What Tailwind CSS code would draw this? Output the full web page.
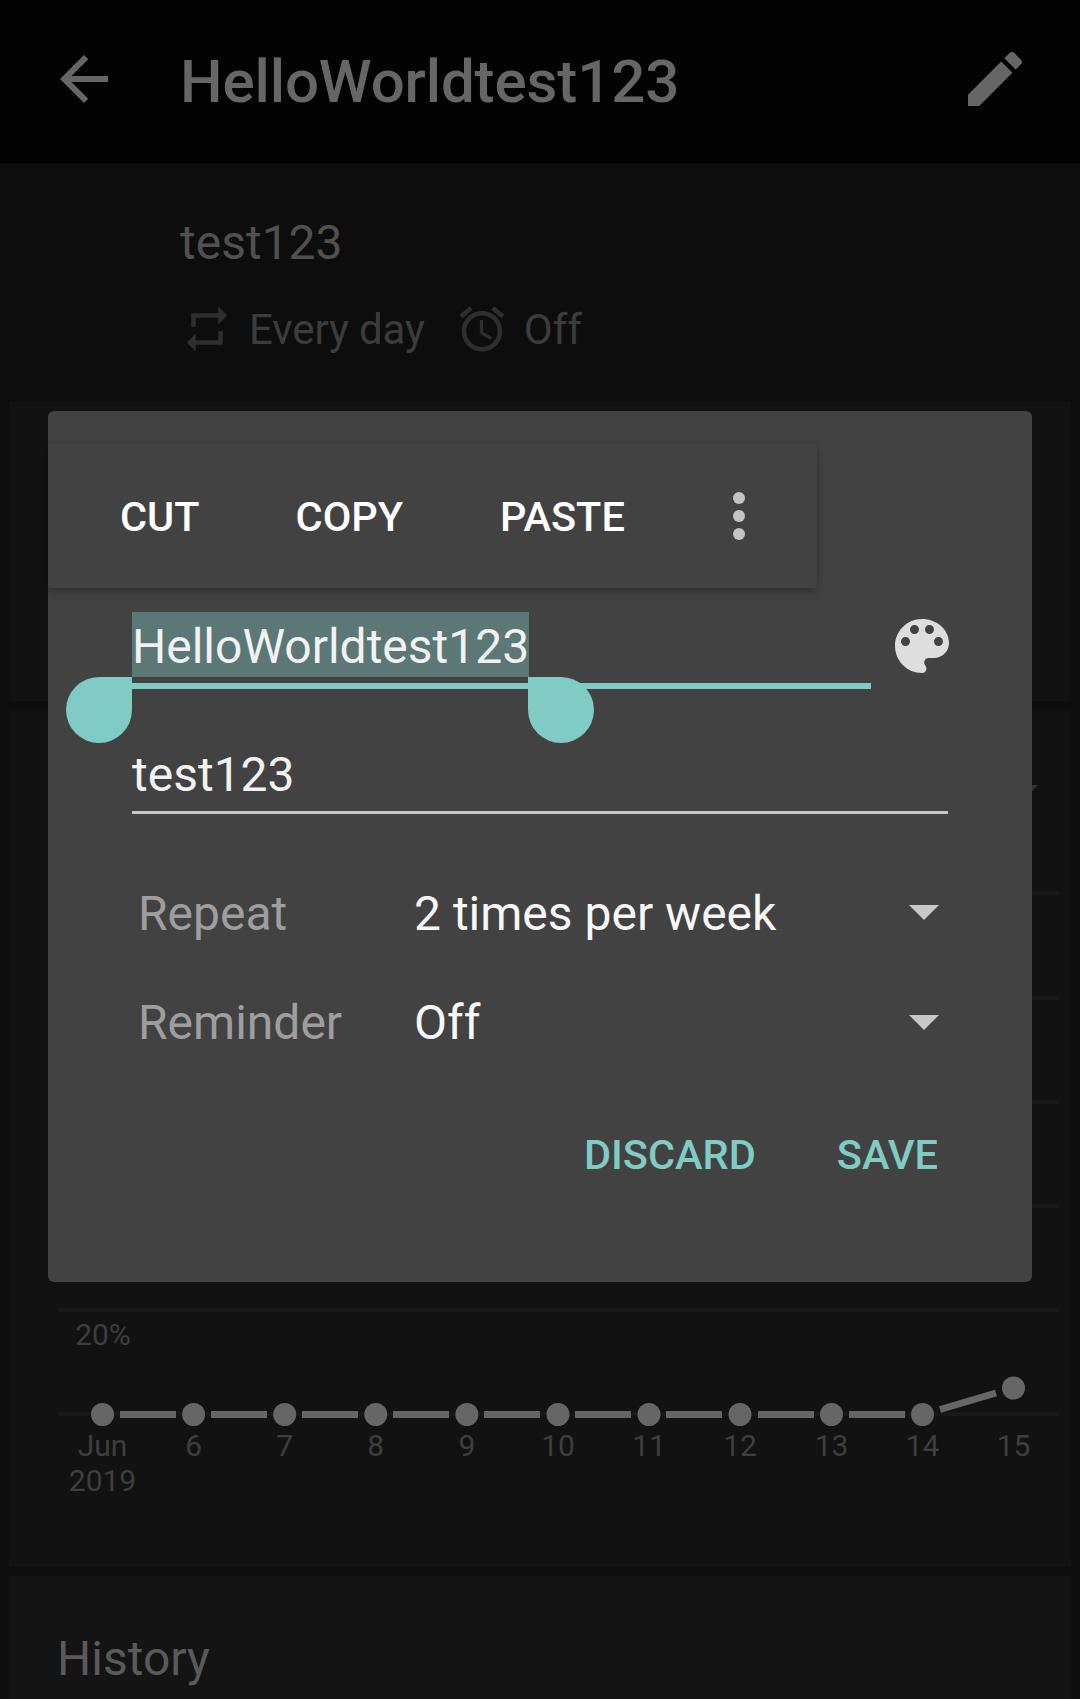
<!DOCTYPE html>
<html lang="en">
<head>
  <meta charset="UTF-8" />
  <meta name="viewport" content="width=device-width, initial-scale=1.0" />
  <title>HelloWorldtest123</title>
  <script src="https://cdn.jsdelivr.net/npm/@tailwindcss/browser@4"></script>
</head>
<body class="bg-[#0d0d0d] font-['Roboto',sans-serif]">
<div class="relative w-[1080px] h-[1699px] overflow-hidden">

  <!-- toolbar -->
  <div class="h-[163px] bg-[#030303] flex items-start">
    <svg class="ml-[48px] mt-[43px] w-[72px] h-[72px] shrink-0" viewBox="0 0 24 24" fill="#666666"><path d="M20 11H7.83l5.59-5.59L12 4l-8 8 8 8 1.41-1.41L7.83 13H20v-2z"/></svg>
    <div class="ml-[60px] mt-[47px] text-[60px] leading-[70px] tracking-[-0.1px] font-medium text-[#666666]">HelloWorldtest123</div>
    <svg class="ml-auto mr-[49px] mt-[43px] w-[72px] h-[72px] shrink-0" viewBox="0 0 24 24" fill="#666666"><path d="M3 17.25V21h3.75L17.81 9.94l-3.75-3.75L3 17.25zM20.71 7.04c.39-.39.39-1.02 0-1.41l-2.34-2.34c-.39-.39-1.02-.39-1.41 0l-1.83 1.83 3.75 3.75 1.83-1.83z"/></svg>
  </div>

  <!-- habit info -->
  <div class="h-[239px] pl-[180px] pt-[47px]">
    <div class="text-[48px] leading-[65px] text-[#505050]">test123</div>
    <div class="mt-[27px] flex items-center h-[54px] text-[42px] text-[#3c3c3c]">
      <svg class="w-[54px] h-[54px]" viewBox="0 0 24 24" fill="#2e2e2e"><path d="M7 7h10v3l4-4-4-4v3H5v6h2V7zm10 10H7v-3l-4 4 4 4v-3h12v-6h-2v4z"/></svg>
      <span class="ml-[15px] tracking-[-0.1px]">Every day</span>
      <svg class="ml-[30px] w-[54px] h-[54px]" viewBox="0 0 24 24" fill="#2e2e2e"><path d="M22 5.72l-4.6-3.86-1.29 1.53 4.6 3.86L22 5.72zM7.88 3.39L6.6 1.86 2 5.71l1.29 1.53 4.59-3.85zM12.5 8H11v6l4.75 2.85.75-1.23-4-2.37V8zM12 4c-4.97 0-9 4.03-9 9s4.03 9 9 9 9-4.03 9-9-4.03-9-9-9zm0 16c-3.87 0-7-3.13-7-7s3.13-7 7-7 7 3.13 7 7-3.13 7-7 7z"/></svg>
      <span class="ml-[15px]">Off</span>
    </div>
  </div>

  <!-- cards behind the dialog -->
  <div class="mx-[9px] h-[299px] bg-[#121212]"></div>
  <div class="mx-[9px] mt-[9px] h-[857px] bg-[#121212]">
    <svg class="block w-[1062px] h-[857px]" viewBox="9 710 1062 857">
      <polygon points="1020,785 1038,785 1026,797" fill="#333333"/>
      <g stroke="#181818" stroke-width="4">
        <line x1="57" y1="893" x2="1059" y2="893"/>
        <line x1="57" y1="998" x2="1059" y2="998"/>
        <line x1="57" y1="1102" x2="1059" y2="1102"/>
        <line x1="57" y1="1206" x2="1059" y2="1206"/>
        <line x1="57" y1="1310" x2="1059" y2="1310"/>
        <line x1="57" y1="1414" x2="1059" y2="1414"/>
      </g>
      <g stroke="#666666" stroke-width="7">
        <line x1="120" y1="1414.5" x2="176" y2="1414.5"/>
        <line x1="211" y1="1414.5" x2="267" y2="1414.5"/>
        <line x1="302" y1="1414.5" x2="358" y2="1414.5"/>
        <line x1="393" y1="1414.5" x2="449" y2="1414.5"/>
        <line x1="484" y1="1414.5" x2="540" y2="1414.5"/>
        <line x1="575" y1="1414.5" x2="631" y2="1414.5"/>
        <line x1="666" y1="1414.5" x2="722" y2="1414.5"/>
        <line x1="758" y1="1414.5" x2="814" y2="1414.5"/>
        <line x1="849" y1="1414.5" x2="905" y2="1414.5"/>
        <line x1="940" y1="1409.5" x2="996" y2="1393"/>
      </g>
      <g fill="#666666">
        <circle cx="102.5" cy="1414.5" r="11.5"/>
        <circle cx="193.6" cy="1414.5" r="11.5"/>
        <circle cx="284.7" cy="1414.5" r="11.5"/>
        <circle cx="375.8" cy="1414.5" r="11.5"/>
        <circle cx="466.9" cy="1414.5" r="11.5"/>
        <circle cx="558" cy="1414.5" r="11.5"/>
        <circle cx="649" cy="1414.5" r="11.5"/>
        <circle cx="740" cy="1414.5" r="11.5"/>
        <circle cx="831.5" cy="1414.5" r="11.5"/>
        <circle cx="922.5" cy="1414.5" r="11.5"/>
        <circle cx="1013.5" cy="1388" r="11.5"/>
      </g>
      <g fill="#3e3e3e" font-size="30" text-anchor="middle">
        <text x="103" y="1345">20%</text>
        <text x="102.5" y="1456">Jun</text>
        <text x="102.5" y="1491">2019</text>
        <text x="193.6" y="1456">6</text>
        <text x="284.7" y="1456">7</text>
        <text x="375.8" y="1456">8</text>
        <text x="466.9" y="1456">9</text>
        <text x="558" y="1456">10</text>
        <text x="649" y="1456">11</text>
        <text x="740" y="1456">12</text>
        <text x="831.5" y="1456">13</text>
        <text x="922.5" y="1456">14</text>
        <text x="1013.5" y="1456">15</text>
      </g>
    </svg>
  </div>
  <div class="mx-[9px] mt-[9px] h-[140px] bg-[#141414] pl-[48px] pt-[55px] text-[48px] leading-[56px] text-[#5a5a5a]">History</div>

  <!-- edit dialog -->
  <div class="absolute left-[48px] top-[411px] w-[984px] h-[871px] rounded-[6px] bg-[#424242]">
    <div class="pl-[84px] pt-[201px] flex items-start">
      <div class="w-[739px]">
        <div class="h-[65px]"><span class="inline-block h-[65px] pt-[5px] text-[48px] leading-[60px] text-[#f2f2f2] bg-[#5b7876]">HelloWorldtest123</span></div>
        <div class="mt-[6px] h-[6px] bg-[#80cbc4]"></div>
      </div>
      <svg class="ml-[15px] -mt-[2px] w-[72px] h-[72px] shrink-0" viewBox="0 0 24 24" fill="#dedede"><path d="M12 3c-4.97 0-9 4.03-9 9s4.03 9 9 9c.83 0 1.5-.67 1.5-1.5 0-.39-.15-.74-.39-1.01-.23-.26-.38-.61-.38-.99 0-.83.67-1.5 1.5-1.5H16c2.76 0 5-2.24 5-5 0-4.42-4.03-8-9-8zm-5.5 9c-.83 0-1.5-.67-1.5-1.5S5.67 9 6.5 9 8 9.67 8 10.5 7.33 12 6.5 12zm3-4C8.67 8 8 7.33 8 6.5S8.67 5 9.5 5s1.5.67 1.5 1.5S10.33 8 9.5 8zm5 0c-.83 0-1.5-.67-1.5-1.5S13.67 5 14.5 5s1.5.67 1.5 1.5S15.33 8 14.5 8zm3 4c-.83 0-1.5-.67-1.5-1.5S16.67 9 17.5 9s1.5.67 1.5 1.5-.67 1.5-1.5 1.5z"/></svg>
    </div>
    <div class="ml-[84px] w-[816px] mt-[53px] pb-[4px] border-b-[3px] border-[#c8c8c8] text-[48px] leading-[65px] text-[#f2f2f2]">test123</div>

    <div class="mt-[67px] pl-[90px] flex items-start text-[48px] leading-[65px]">
      <div class="w-[276px] text-[#9e9e9e]">Repeat</div>
      <div class="text-[#f7f7f7]">2 times per week</div>
      <svg class="ml-auto mr-[93px] mt-[24px] w-[30px] h-[15px]" viewBox="0 0 30 15" fill="#c8c8c8"><polygon points="0,0 30,0 15,15"/></svg>
    </div>
    <div class="mt-[44px] pl-[90px] flex items-start text-[48px] leading-[65px]">
      <div class="w-[276px] text-[#9e9e9e]">Reminder</div>
      <div class="text-[#f7f7f7]">Off</div>
      <svg class="ml-auto mr-[93px] mt-[25px] w-[30px] h-[15px]" viewBox="0 0 30 15" fill="#c8c8c8"><polygon points="0,0 30,0 15,15"/></svg>
    </div>

    <div class="mt-[75px] pr-[94px] flex justify-end gap-[81px] text-[41.5px] leading-[49px] font-medium text-[#80cbc4]">
      <span>DISCARD</span>
      <span>SAVE</span>
    </div>

    <!-- text selection menu -->
    <div class="absolute left-0 top-[33px] w-[769px] h-[144px] rounded-[4px] bg-[#424242] shadow-[0_3px_8px_rgba(0,0,0,0.3)] flex items-center pl-[72px] text-[41.5px] font-medium text-white">
      <span class="mt-[2px]">CUT</span>
      <span class="mt-[2px] ml-[96px]">COPY</span>
      <span class="mt-[2px] ml-[97px]">PASTE</span>
      <div class="ml-[108px] flex flex-col gap-[6px]">
        <div class="w-[12px] h-[12px] rounded-full bg-[#c4c4c4]"></div>
        <div class="w-[12px] h-[12px] rounded-full bg-[#c4c4c4]"></div>
        <div class="w-[12px] h-[12px] rounded-full bg-[#c4c4c4]"></div>
      </div>
    </div>

    <!-- selection handles -->
    <div class="absolute left-[18px] top-[266px] w-[66px] h-[66px] rounded-full rounded-tr-none bg-[#80cbc4]"></div>
    <div class="absolute left-[480px] top-[266px] w-[66px] h-[66px] rounded-full rounded-tl-none bg-[#80cbc4]"></div>
  </div>
</div>
</body>
</html>
